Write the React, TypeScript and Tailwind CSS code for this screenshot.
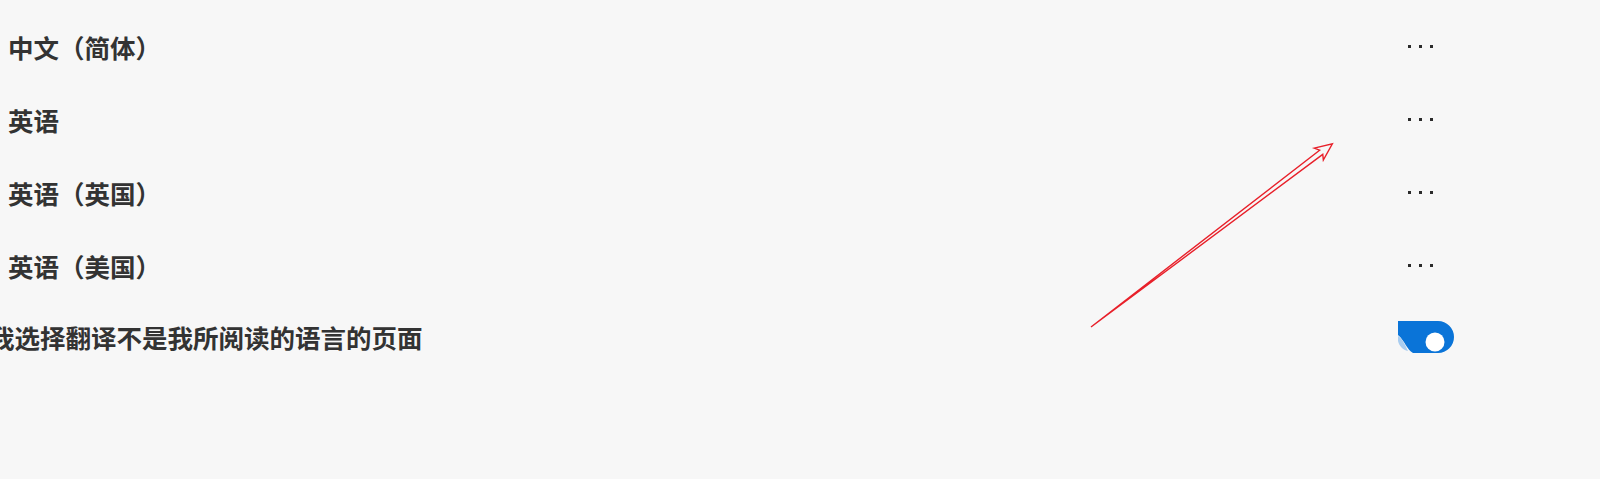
import React from "react";

const languages = ["中文（简体）", "英语", "英语（英国）", "英语（美国）"];

function MoreDots() {
  return (
    <div className="flex w-[25px] items-center justify-between">
      <span className="h-[3px] w-[3px] bg-[#2b2b2b]" />
      <span className="h-[3px] w-[3px] bg-[#2b2b2b]" />
      <span className="h-[3px] w-[3px] bg-[#2b2b2b]" />
    </div>
  );
}

function Toggle() {
  return (
    <svg width="58" height="34" viewBox="1396 319 58 34" className="block">
      <path
        d="M1397,320 H1437 A16,16 0 0 1 1437,352 H1412 C1406,349 1404,340 1397,334 Z"
        fill="#0a74d8"
      />
      <path d="M1397,335 C1402,338 1404,344 1407,350 C1402,349 1398,345 1397,340 Z" fill="#a9cdf0" />
      <circle cx="1434" cy="341" r="9.5" fill="#ffffff" />
    </svg>
  );
}

function Arrow() {
  const L = 303;
  return (
    <svg className="pointer-events-none absolute left-0 top-0" width="1600" height="479">
      <g transform="translate(1091,327) rotate(-37.2)">
        <polygon
          points={`0,0 ${L - 14},-2.6 ${L - 17},-7.5 ${L},0 ${L - 17},7.5 ${L - 14},2.6`}
          fill="none"
          stroke="#e8202a"
          strokeWidth="1.4"
          strokeLinejoin="miter"
        />
      </g>
    </svg>
  );
}

export default function App() {
  return (
    <div
      className="relative h-[479px] w-[1600px] overflow-hidden bg-[#f7f7f7] text-[#333333]"
      style={{ fontFamily: '"Noto Sans CJK SC", "Noto Sans", sans-serif' }}
    >
      <div className="flex w-[1455px] flex-col pt-[10px]">
        {languages.map((name) => (
          <div key={name} className="flex h-[73px] items-center justify-between pl-[8px] pr-[22px]">
            <span className="text-[25.5px] font-semibold leading-none">{name}</span>
            <MoreDots />
          </div>
        ))}
        <div className="flex h-[70px] items-center justify-between">
          <span className="-ml-[11px] text-[25.5px] font-semibold leading-none">
            我选择翻译不是我所阅读的语言的页面
          </span>
          <Toggle />
        </div>
      </div>
      <Arrow />
    </div>
  );
}
